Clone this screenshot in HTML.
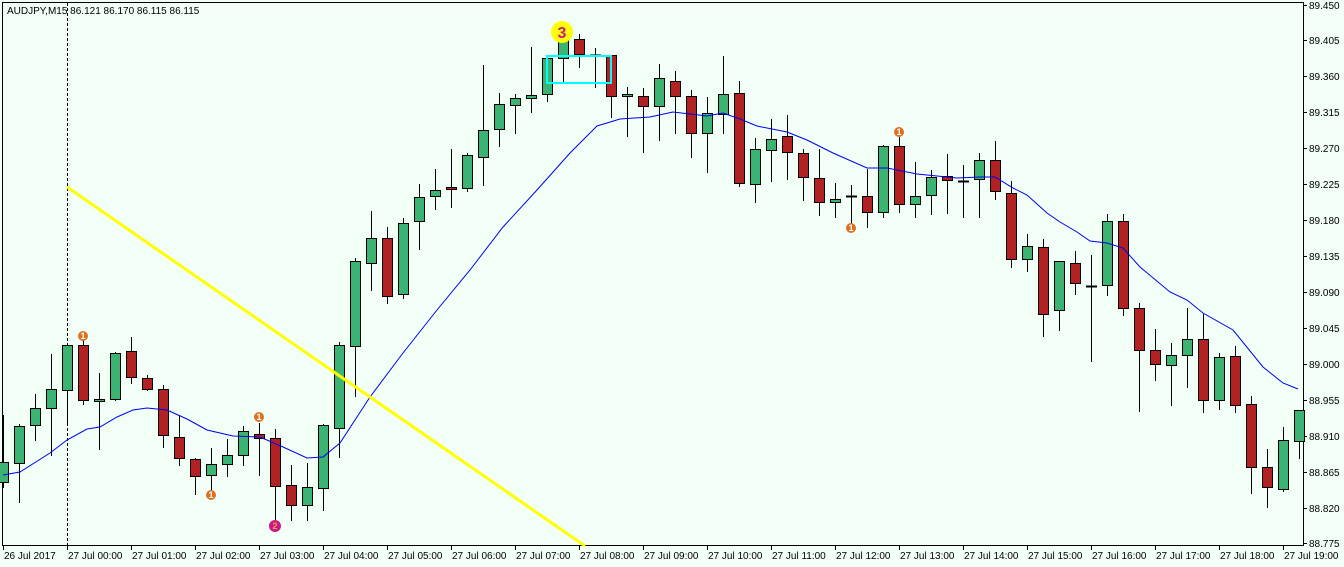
<!DOCTYPE html>
<html><head><meta charset="utf-8"><style>
html,body{margin:0;padding:0;background:#f2fff6;}
svg{display:block;font-family:"Liberation Sans",sans-serif;}
</style></head><body>
<svg id="s" width="1344" height="567" xmlns="http://www.w3.org/2000/svg">
<rect width="1344" height="567" fill="#f2fff6"/>
<line x1="2.5" y1="2" x2="2.5" y2="546" stroke="#000"/>
<line x1="2" y1="2.5" x2="1304" y2="2.5" stroke="#000"/>
<line x1="1303.5" y1="2" x2="1303.5" y2="546" stroke="#000"/>
<line x1="2" y1="545.5" x2="1304" y2="545.5" stroke="#000"/>
<line x1="67.5" y1="3" x2="67.5" y2="545" stroke="#000" stroke-dasharray="3,2"/>
<text x="7" y="14" font-size="10" fill="#000">AUDJPY,M15  86.121 86.170 86.115 86.115</text>
<g id="c"></g>
<polyline fill="none" stroke="#0000ee" stroke-width="1" points="3,475 20,472 50,453 67,440 87,429 100,427 117,417 133,410 147,408 167,410 187,419 207,430 233,436 260,437 283,447 307,458 323,457 340,443 370,397 403,353 437,310 470,270 503,227 537,190 570,153 597,126 620,119 650,117 673,112 707,116 723,113 740,119 757,126 787,132 807,140 833,153 867,168 887,168 917,174 957,178 980,177 995,177 1013,188 1027,195 1047,213 1060,222 1077,232 1090,241 1107,243 1123,248 1140,267 1170,292 1187,300 1203,313 1233,330 1263,367 1283,383 1298,389"/>
<line x1="67" y1="187" x2="585" y2="546" stroke="#ffff00" stroke-width="3"/>
<rect x="547" y="56" width="64" height="27" fill="none" stroke="#00ffff" stroke-width="2"/>
<g font-size="9" font-weight="bold" text-anchor="middle" fill="#fff">
<circle cx="83" cy="336" r="5" fill="#e07020"/><text x="83" y="339">1</text>
<circle cx="211" cy="495" r="5" fill="#e07020"/><text x="211" y="498">1</text>
<circle cx="259" cy="417" r="5" fill="#e07020"/><text x="259" y="420">1</text>
<circle cx="275" cy="526" r="6" fill="#cc1888"/><text x="275" y="529" fill="#f0a040">2</text>
<circle cx="851" cy="228" r="5" fill="#e07020"/><text x="851" y="231">1</text>
<circle cx="899" cy="132" r="5" fill="#e07020"/><text x="899" y="135">1</text>
<circle cx="562" cy="32" r="11" fill="#ffff00"/><text x="562" y="38" font-size="16" fill="#cc1888">3</text>
</g>
<g id="ax" font-size="10" fill="#000"></g>
</svg>
<script>
var d=[[0,'g',462,482,415,487],[1,'g',426,463,424,502],[2,'g',408,425,394,440],[3,'g',389,408,354,455],[4,'g',345,390,345,425],[5,'r',345,400,340,404],[6,'g',399,401,373,449],[7,'g',353,399,352,400],[8,'r',351,377,337,383],[9,'r',378,389,375,390],[10,'r',389,435,385,447],[11,'r',437,458,415,465],[12,'r',459,476,458,494],[13,'g',464,475,448,495],[14,'g',455,464,439,476],[15,'g',431,455,426,465],[16,'r',434,438,423,475],[17,'r',438,486,429,524],[18,'r',485,505,465,520],[19,'g',487,505,463,520],[20,'g',425,488,424,510],[21,'g',345,428,342,457],[22,'g',261,346,258,396],[23,'g',238,263,211,290],[24,'r',238,296,227,303],[25,'g',223,294,218,298],[26,'g',197,221,184,249],[27,'g',190,196,169,209],[28,'r',187,189,149,207],[29,'g',155,188,153,191],[30,'g',130,157,65,185],[31,'g',104,129,93,146],[32,'g',98,105,94,133],[33,'g',95,98,47,112],[34,'g',58,94,58,101],[35,'g',40,58,33,81],[36,'r',39,54,34,67],[37,'d',55,55,48,87],[38,'r',55,96,55,117],[39,'g',94,96,87,136],[40,'r',96,106,88,152],[41,'g',78,106,64,140],[42,'r',81,96,71,133],[43,'r',96,133,90,157],[44,'g',113,133,97,172],[45,'g',94,114,56,133],[46,'r',93,183,81,186],[47,'g',149,184,138,202],[48,'g',139,150,119,181],[49,'r',136,152,115,179],[50,'r',153,177,149,200],[51,'r',178,202,149,215],[52,'g',199,202,183,217],[53,'d',196,196,185,228],[54,'r',196,212,169,227],[55,'g',146,212,145,217],[56,'r',146,204,137,212],[57,'g',196,204,162,217],[58,'g',177,195,170,214],[59,'r',176,180,154,213],[60,'d',181,181,165,217],[61,'g',160,179,153,217],[62,'r',160,191,141,199],[63,'r',193,259,181,267],[64,'g',246,259,234,271],[65,'r',247,314,239,336],[66,'g',261,310,261,330],[67,'r',263,283,251,294],[68,'d',286,286,255,361],[69,'g',221,285,214,295],[70,'r',221,308,214,315],[71,'r',308,350,303,411],[72,'r',350,364,329,380],[73,'g',355,365,343,405],[74,'g',339,355,308,387],[75,'r',339,400,314,412],[76,'g',357,400,353,409],[77,'r',356,405,346,412],[78,'r',404,467,396,493],[79,'r',467,487,449,507],[80,'g',440,489,427,491],[81,'g',410,441,410,458]];
var ns='http://www.w3.org/2000/svg',g=document.getElementById('c'),h='';
d.forEach(function(a){var c=3+16*a[0];
h+='<line x1="'+(c+.5)+'" y1="'+a[4]+'" x2="'+(c+.5)+'" y2="'+(a[5]+1)+'" stroke="#000"/>';
if(a[1]=='d'){h+='<line x1="'+(c-5)+'" y1="'+(a[2]+.5)+'" x2="'+(c+6)+'" y2="'+(a[2]+.5)+'" stroke="#000" stroke-width="2"/>';}
else{h+='<rect x="'+(c-4.5)+'" y="'+(a[2]+.5)+'" width="10" height="'+Math.max(1,a[3]-a[2])+'" fill="'+(a[1]=='g'?'#3cb371':'#b22222')+'" stroke="#000"/>';}
});
g.innerHTML=h;
</script>
<script>
var ax=document.getElementById('ax'),t='';
var v=['89.450','89.405','89.360','89.315','89.270','89.225','89.180','89.135','89.090','89.045','89.000','88.955','88.910','88.865','88.820','88.775'];
v.forEach(function(s,i){var y=Math.round(4.5+i*35.93);t+='<line x1="1304" y1="'+(y+.5)+'" x2="1307" y2="'+(y+.5)+'" stroke="#000"/><text x="1309" y="'+(y+4)+'">'+s+'</text>';});
var lb=['26 Jul 2017'];for(var i=0;i<20;i++)lb.push('27 Jul '+(i<10?'0':'')+i+':00');
lb.forEach(function(s,i){var x=i==0?3:67+(i-1)*64;t+='<line x1="'+(x+.5)+'" y1="546" x2="'+(x+.5)+'" y2="550" stroke="#000"/><text x="'+(x+1)+'" y="559">'+s+'</text>';});
ax.innerHTML=t;
</script>
</body></html>
